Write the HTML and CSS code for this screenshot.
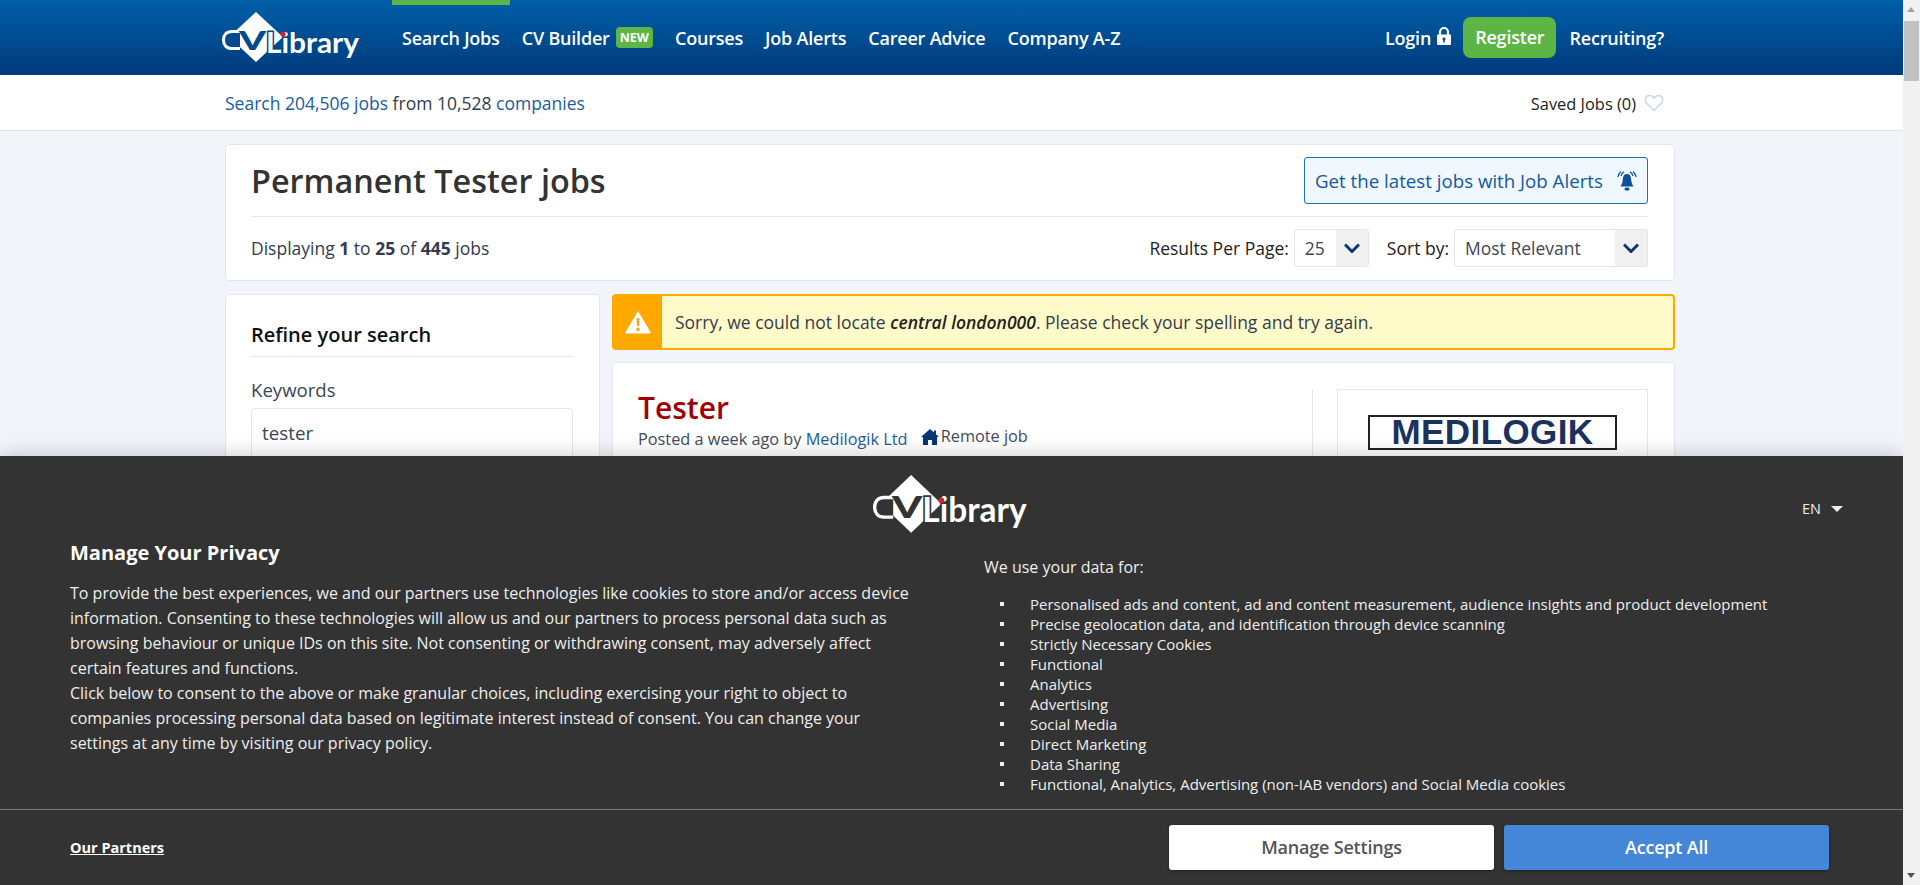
FILE: index.html
```html
<!DOCTYPE html>
<html lang="en">
<head>
<meta charset="utf-8">
<title>Permanent Tester jobs</title>
<link rel="stylesheet" href="styles.css">
</head>
<body>
<svg class="sprite" width="0" height="0" aria-hidden="true">
  <defs>
    <symbol id="cvlogo" viewBox="0 0 140 52" preserveAspectRatio="none">
      <polygon points="34,0 61,25 34,50 7,25" fill="#fff"/>
      <path d="M18 19.500 H10 C4.500 19.500 1.500 23 1.500 28 C1.500 33 4.500 36.500 10 36.500 H18" fill="var(--logo-bg)" stroke="#fff" stroke-width="3"/>
      <text class="logo-v" x="17" y="37.500" textLength="27" lengthAdjust="spacingAndGlyphs" fill="var(--logo-bg)">V</text>
      <text class="logo-word" x="44" y="41" textLength="93" lengthAdjust="spacingAndGlyphs" fill="#fff">Library</text>
      <circle cx="61" cy="22" r="2.500" fill="#e2202c"/>
    </symbol>
    <symbol id="chev" viewBox="0 0 16 10">
      <path d="M1 1.500 L8 8.500 L15 1.500" fill="none" stroke="#0b3575" stroke-width="3"/>
    </symbol>
  </defs>
</svg>
<div class="viewport">
  <div class="page">
    <header class="topbar">
      <div class="wrap topbar-in">
        <a class="brand"><svg class="logo logo-head"><use href="#cvlogo"/></svg></a>
        <nav class="mainnav">
          <a class="nav-item active">Search Jobs</a>
          <a class="nav-item">CV Builder <span class="badge">NEW</span></a>
          <a class="nav-item">Courses</a>
          <a class="nav-item">Job Alerts</a>
          <a class="nav-item">Career Advice</a>
          <a class="nav-item">Company A-Z</a>
        </nav>
        <nav class="usernav">
          <a class="nav-item login">Login
            <svg class="lock" viewBox="0 0 16 20"><path d="M4 9 V6 a4 4 0 0 1 8 0 V9" fill="none" stroke="#fff" stroke-width="2.200"/><path fill-rule="evenodd" d="M2 8.500 H14 a1 1 0 0 1 1 1 V18 a1 1 0 0 1-1 1 H2 a1 1 0 0 1-1-1 V9.500 a1 1 0 0 1 1-1 Z M8 11.500 a1.500 1.500 0 0 0-.8 2.800 V16.500 H8.800 V14.300 A1.500 1.500 0 0 0 8 11.500 Z" fill="#fff"/></svg>
          </a>
          <a class="register">Register</a>
          <a class="nav-item">Recruiting?</a>
        </nav>
      </div>
    </header>
    <div class="subbar">
      <div class="wrap subbar-in">
        <p class="stats"><a>Search 204,506 jobs</a> from 10,528 <a>companies</a></p>
        <p class="saved">Saved Jobs (0)
          <svg class="heart" viewBox="0 0 20 18"><path d="M10 16.500 L2.500 9 C0 6 1.500 1.500 5.500 1.500 C7.500 1.500 9 2.500 10 4 C11 2.500 12.500 1.500 14.500 1.500 C18.500 1.500 20 6 17.500 9 Z" fill="none" stroke="#cdd3e0" stroke-width="1.500"/></svg>
        </p>
      </div>
    </div>
    <main class="wrap content">
      <section class="card titlecard">
        <div class="title-row">
          <h1>Permanent Tester jobs</h1>
          <a class="alertbtn">Get the latest jobs with Job Alerts
            <svg class="bell" viewBox="0 0 22 22"><path d="M11 4 C7.500 4 7 7 6.800 10 C6.600 13 5.500 15 4.500 16.500 H17.500 C16.500 15 15.400 13 15.200 10 C15 7 14.500 4 11 4 Z" fill="#0b4f94"/><rect x="8.500" y="17.500" width="5" height="3" rx="1.500" fill="#0b4f94"/><path d="M5 6 C5.500 4 6.500 2.800 8 1.800 M17 6 C16.500 4 15.500 2.800 14 1.800 M2 7 C2.500 4.500 3.500 2.800 5 1.500 M20 7 C19.500 4.500 18.500 2.800 17 1.500" fill="none" stroke="#0b4f94" stroke-width="1.200"/></svg>
          </a>
        </div>
        <div class="control-row">
          <p class="display">Displaying <b>1</b> to <b>25</b> of <b>445</b> jobs</p>
          <div class="controls">
            <span class="ctl-label">Results Per Page:</span>
            <div class="select sel-small"><span>25</span><i class="arrow"><svg class="chev"><use href="#chev"/></svg></i></div>
            <span class="ctl-label ctl-sort">Sort by:</span>
            <div class="select sel-large"><span>Most Relevant</span><i class="arrow"><svg class="chev"><use href="#chev"/></svg></i></div>
          </div>
        </div>
      </section>
      <div class="columns">
        <aside class="card sidebar">
          <h2>Refine your search</h2>
          <label class="field-label">Keywords</label>
          <div class="input">tester</div>
        </aside>
        <div class="results">
          <div class="notice">
            <div class="notice-icon">
              <svg viewBox="0 0 26 24"><path fill-rule="evenodd" d="M13 1 L25.500 22 a1 1 0 0 1-1 1.500 H1.500 a1 1 0 0 1-1-1.500 Z M11.500 8 L12 16 H14 L14.500 8 Z M13 17.500 a1.800 1.800 0 1 0 .01 0 Z" fill="#fff"/></svg>
            </div>
            <p>Sorry, we could not locate <b><em>central london000</em></b>. Please check your spelling and try again.</p>
          </div>
          <article class="card job">
            <div class="job-main">
              <h3>Tester</h3>
              <p class="job-meta">Posted a week ago by <a>Medilogik Ltd</a>
                <span class="remote"><svg class="house" viewBox="0 0 18 16"><path d="M9 0 L13 3.500 V1.500 H15 V5.300 L18 8 H16 V16 H11 V11 H7 V16 H2 V8 H0 Z" fill="#0b3575"/></svg>Remote job</span>
              </p>
            </div>
            <div class="job-logo">
              <div class="medilogik">MEDILOGIK</div>
            </div>
          </article>
        </div>
      </div>
    </main>
    <section class="consent">
      <div class="consent-logo"><svg class="logo logo-consent"><use href="#cvlogo"/></svg></div>
      <div class="lang">EN <i class="caret"></i></div>
      <div class="consent-cols">
        <div class="consent-left">
          <h4>Manage Your Privacy</h4>
          <p>To provide the best experiences, we and our partners use technologies like cookies to store and/or access device information. Consenting to these technologies will allow us and our partners to process personal data such as browsing behaviour or unique IDs on this site. Not consenting or withdrawing consent, may adversely affect certain features and functions.<br>Click below to consent to the above or make granular choices, including exercising your right to object to companies processing personal data based on legitimate interest instead of consent. You can change your settings at any time by visiting our privacy policy.</p>
        </div>
        <div class="consent-right">
          <p>We use your data for:</p>
          <ul>
            <li>Personalised ads and content, ad and content measurement, audience insights and product development</li>
            <li>Precise geolocation data, and identification through device scanning</li>
            <li>Strictly Necessary Cookies</li>
            <li>Functional</li>
            <li>Analytics</li>
            <li>Advertising</li>
            <li>Social Media</li>
            <li>Direct Marketing</li>
            <li>Data Sharing</li>
            <li>Functional, Analytics, Advertising (non-IAB vendors) and Social Media cookies</li>
          </ul>
        </div>
      </div>
      <div class="consent-foot">
        <a class="partners">Our Partners</a>
        <div class="consent-btns">
          <button class="btn btn-manage">Manage Settings</button>
          <button class="btn btn-accept">Accept All</button>
        </div>
      </div>
    </section>
  </div>
  <div class="scrollbar">
    <i class="sb-up"></i>
    <i class="sb-thumb"></i>
    <i class="sb-down"></i>
  </div>
</div>
</body>
</html>
```
FILE: styles.css
```css
* { box-sizing: border-box; }
html, body { margin: 0; height: 100%; overflow: hidden; }
body { font-family: "Open Sans", "Liberation Sans", sans-serif; color: #333c4e; background: #f1f5f9; font-size: 16px; }
p, h1, h2, h3, h4, ul { margin: 0; padding: 0; }
.sprite { position: absolute; }
.viewport { display: flex; height: 885px; }
.page { position: relative; flex: 1; min-width: 0; height: 885px; overflow: hidden; background: #f1f5f9; }
.wrap { width: 1450px; margin-left: 225px; }

/* top */
.topbar { height: 75px; background: linear-gradient(#005fa8, #003b7b); }
.topbar-in { display: flex; align-items: stretch; height: 75px; position: relative; }
.brand { display: block; width: 166px; margin-left: -3px; padding-top: 12px; }
.logo { display: block; --logo-bg: #004a8e; }
.logo-head { width: 140px; height: 52px; }
.logo-word { font-family: "Lato", sans-serif; font-size: 29px; font-weight: 700; stroke: var(--logo-bg); stroke-width: 3px; paint-order: stroke; }
.logo-v { font-family: "Lato", sans-serif; font-size: 27px; font-weight: 900; }
.mainnav { display: flex; gap: 22px; margin-left: 14px; }
.usernav { display: flex; align-items: center; margin-left: auto; margin-right: 11px; }
.nav-item { display: flex; align-items: center; height: 75px; color: #fff; font-size: 18px; font-weight: 600; letter-spacing: -.2px; white-space: nowrap; position: relative; }
.active::before { content: ""; position: absolute; top: 0; left: -10px; right: -10px; height: 5px; background: #5cb545; }
.badge { display: inline-block; margin-left: 6px; padding: 0 4px; height: 21px; line-height: 21px; border-radius: 4px; background: #5cb545; font-size: 12.500px; font-weight: 700; letter-spacing: 0; }
.lock { width: 16px; height: 20px; margin-left: 5px; margin-top: -3px; }
.register { display: block; margin: 0 13px 0 11px; padding: 0 12px; height: 41px; line-height: 41px; border-radius: 8px; background: #5cb545; color: #fff; font-size: 18px; font-weight: 600; letter-spacing: -.2px; }

.subbar { height: 56px; background: #fff; border-bottom: 1px solid #dfe3e9; }
.subbar-in { display: flex; justify-content: space-between; align-items: center; height: 55px; padding-top: 1px; }
.stats { font-size: 17.500px; color: #333c4e; }
.stats a { color: #1a5c9e; }
.saved { display: flex; align-items: center; margin-right: 11px; font-size: 16.400px; color: #222; }
.heart { width: 20px; height: 18px; margin-left: 8px; }

/* cards */
.content { padding-top: 13px; }
.card { background: #fff; border: 1px solid #e3e7ec; border-radius: 4px; }
.titlecard { height: 137px; padding: 12px 26px 0 25px; }
.title-row { display: flex; justify-content: space-between; align-items: flex-start; height: 60px; border-bottom: 1px solid #e3e6ea; }
h1 { font-size: 32.400px; font-weight: 600; line-height: 46px; color: #333; }
.alertbtn { display: flex; align-items: center; justify-content: space-between; width: 344px; height: 47px; padding: 0 9px 0 10px; background: #f0f7ff; border: 1px solid #1f6fb8; border-radius: 3px; color: #135a9f; font-size: 18.700px; }
.bell { width: 22px; height: 24px; }
.control-row { display: flex; justify-content: space-between; align-items: center; height: 52px; padding-top: 10px; }
.display { font-size: 17.500px; }
.display b { font-weight: 700; }
.controls { display: flex; align-items: center; }
.ctl-label { font-size: 17.500px; color: #222; margin-right: 5px; }
.ctl-sort { margin-left: 18px; }
.select { display: flex; align-items: center; justify-content: space-between; height: 38px; padding-left: 10px; background: #fff; border: 1px solid #e3e5e8; border-radius: 3px; font-size: 17.500px; color: #445; }
.sel-small { width: 75px; }
.sel-large { width: 194px; }
.arrow { display: flex; align-items: center; justify-content: center; width: 32px; height: 36px; background: #f0f0f0; }
.chev { width: 16px; height: 10px; }

.columns { display: flex; gap: 12px; margin-top: 13px; align-items: flex-start; }
.sidebar { width: 375px; height: 400px; padding: 27px 26px 0 25px; }
h2 { height: 35px; font-size: 20px; font-weight: 600; line-height: 26px; color: #111; border-bottom: 1px solid #e3e6ea; }
.field-label { display: block; margin-top: 21px; font-size: 18.600px; line-height: 24px; color: #3c4557; }
.input { margin-top: 6px; height: 52px; padding: 12px 10px 0; border: 1px solid #e3e6ea; border-radius: 4px; font-size: 18.800px; line-height: 24px; color: #3c4557; }
.results { flex: 1; min-width: 0; }
.notice { display: flex; align-items: center; height: 56px; border: 2px solid #ffa800; border-radius: 4px; background: #fffbc9; }
.notice-icon { display: flex; align-items: center; justify-content: center; width: 48px; height: 52px; background: #ffa800; }
.notice-icon svg { width: 26px; height: 24px; }
.notice p { margin-left: 13px; font-size: 17.500px; color: #333c4e; }
.notice b { font-weight: 600; color: #222; }
.job { display: flex; justify-content: space-between; margin-top: 12px; height: 320px; padding: 26px 26px 0 25px; }
.job-main { width: 675px; border-right: 1px solid #e3e6ea; }
h3 { font-size: 30px; font-weight: 600; line-height: 36px; margin-top: 1px; color: #a00000; }
.job-meta { font-size: 16.300px; line-height: 21px; color: #444c5e; }
.job-meta a { color: #1a5c9e; }
.remote { display: inline-flex; align-items: center; margin-left: 9px; }
.house { width: 18px; height: 16px; margin-right: 2px; }
.job-logo { width: 311px; height: 200px; padding: 25px 30px 0; border: 1px solid #e3e6ea; }
.medilogik { height: 35px; border: 2px solid #222; font-family: "Liberation Sans", sans-serif; font-weight: 700; font-size: 35px; line-height: 30px; text-align: center; color: #1b3160; letter-spacing: .4px; }

/* consent */
.consent { position: absolute; left: 0; right: 0; bottom: 0; height: 429px; background: #333; color: #eee; box-shadow: 0 0 20px rgba(0,0,0,.22); }
.consent-logo { display: flex; justify-content: center; padding-top: 19px; height: 83px; }
.logo-consent { width: 157px; height: 60px; --logo-bg: #333; }
.lang { position: absolute; top: 43px; left: 1802px; display: flex; align-items: center; font-size: 14.500px; color: #eee; }
.caret { margin-left: 10px; border-left: 6px solid transparent; border-right: 6px solid transparent; border-top: 6px solid #eee; }
.consent-cols { display: flex; height: 271px; padding-left: 70px; border-bottom: 1px solid #777; }
.consent-left { width: 845px; }
.consent-left h4 { font-size: 20px; font-weight: 700; line-height: 27px; color: #fff; margin-bottom: 15px; }
.consent-left p { font-size: 16px; line-height: 25px; }
.consent-right { margin-left: 69px; padding-top: 16px; }
.consent-right p { font-size: 16px; line-height: 24px; margin-bottom: 15px; }
.consent-right ul { list-style: none; padding-left: 16px; font-size: 15px; }
.consent-right li { display: flex; align-items: center; line-height: 20px; white-space: nowrap; }
.consent-right li::before { content: ""; width: 4px; height: 4px; margin-right: 26px; background: #eee; }
.consent-foot { display: flex; justify-content: space-between; align-items: center; height: 75px; padding: 0 74px 0 70px; }
.partners { font-size: 14.500px; font-weight: 700; color: #fff; text-decoration: underline; }
.consent-btns { display: flex; gap: 10px; margin-top: -1px; }
.btn { width: 325px; height: 45px; border: 0; border-radius: 3px; font-family: inherit; font-size: 18px; font-weight: 600; letter-spacing: -.2px; box-shadow: 0 1px 3px rgba(0,0,0,.4); }
.btn-manage { background: #fff; color: #555; }
.btn-accept { background: #4486d8; color: #fff; }

/* scrollbar */
.scrollbar { position: relative; flex: 0 0 17px; height: 885px; background: #f1f1f1; }
.sb-thumb { position: absolute; top: 21px; left: 1px; width: 15px; height: 60px; background: #c1c1c1; }
.sb-up, .sb-down { position: absolute; left: 4px; border-left: 4.500px solid transparent; border-right: 4.500px solid transparent; }
.sb-up { top: 7px; border-bottom: 5px solid #a3a3a3; }
.sb-down { bottom: 7px; border-top: 5px solid #505050; }
```
